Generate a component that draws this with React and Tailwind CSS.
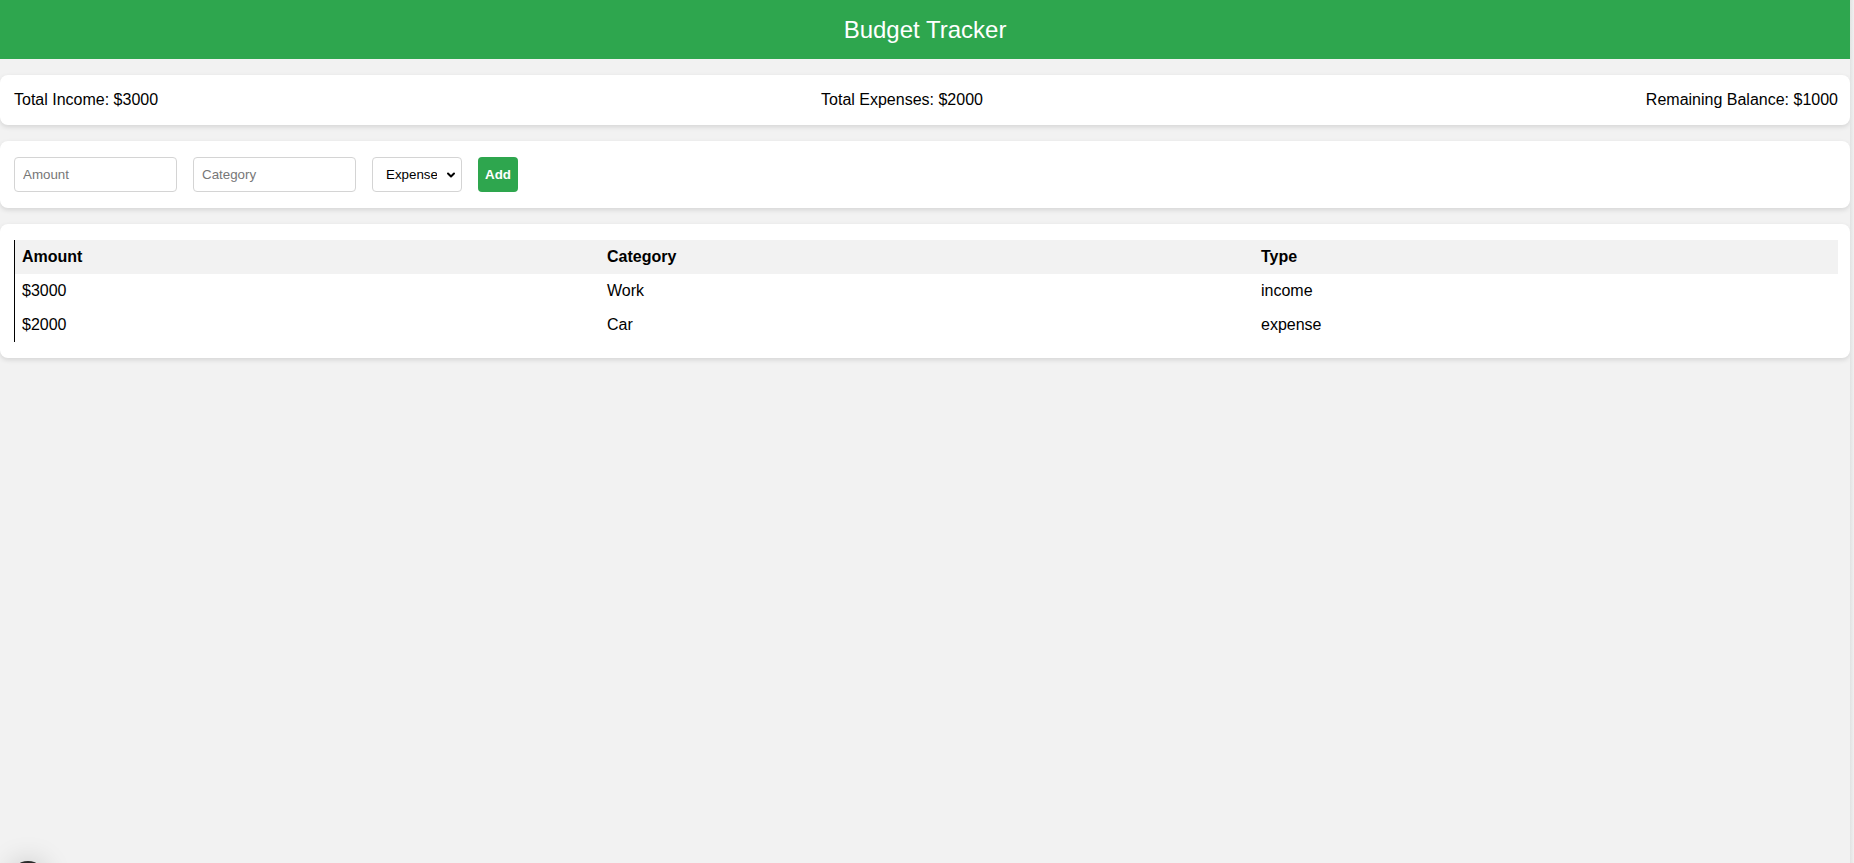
import { ChevronDown } from 'lucide-react'

const transactions = [
  { amount: 3000, category: 'Work', type: 'income' },
  { amount: 2000, category: 'Car', type: 'expense' },
]

const Card = ({ className = '', children }) => (
  <div className={`bg-white rounded-lg shadow-[0_2px_5px_rgba(0,0,0,0.12)] pl-[14px] pr-[12px] ${className}`}>
    {children}
  </div>
)

const Summary = () => {
  const income = transactions.filter(t => t.type === 'income').reduce((s, t) => s + t.amount, 0)
  const expenses = transactions.filter(t => t.type === 'expense').reduce((s, t) => s + t.amount, 0)

  return (
    <Card className="mt-4 py-4 flex items-center justify-between leading-[18px] text-[16px] text-black">
      <span>Total Income: ${income}</span>
      <span>Total Expenses: ${expenses}</span>
      <span>Remaining Balance: ${income - expenses}</span>
    </Card>
  )
}

const EntryForm = () => (
  <Card className="mt-4 py-4 flex items-center gap-4">
    <input
      type="number"
      placeholder="Amount"
      className="w-[163px] h-[35px] px-2 border border-[#d4d4d4] rounded-[4px] text-[13.33px] placeholder:text-[#777] outline-none"
    />
    <input
      type="text"
      placeholder="Category"
      className="w-[163px] h-[35px] px-2 border border-[#d4d4d4] rounded-[4px] text-[13.33px] placeholder:text-[#777] outline-none"
    />
    <div className="relative">
      <select
        defaultValue="expense"
        className="appearance-none w-[90px] h-[35px] pl-[13px] pr-6 border border-[#d4d4d4] rounded-[4px] text-[13.33px] text-black bg-white outline-none"
      >
        <option value="income">Income</option>
        <option value="expense">Expense</option>
      </select>
      <ChevronDown className="absolute right-[5px] top-[12px] w-[12px] h-[12px] text-black pointer-events-none" strokeWidth={4} />
    </div>
    <button className="w-[40px] h-[35px] bg-[#2ea64e] text-white text-[13.33px] font-semibold rounded-[4px]">
      Add
    </button>
  </Card>
)

const TransactionTable = () => (
  <Card className="mt-4 py-4">
    <table className="w-full border-l border-black border-separate border-spacing-0 text-[16px] leading-[18px] text-black">
      <thead>
        <tr className="bg-[#f2f2f2]">
          <th className="w-[586px] text-left font-bold py-2 pl-[7px]">Amount</th>
          <th className="w-[654px] text-left font-bold py-2 pl-[6px]">Category</th>
          <th className="text-left font-bold py-2 pl-[6px]">Type</th>
        </tr>
      </thead>
      <tbody>
        {transactions.map((t, i) => (
          <tr key={i}>
            <td className="py-2 pl-[7px]">${t.amount}</td>
            <td className="py-2 pl-[6px]">{t.category}</td>
            <td className="py-2 pl-[6px]">{t.type}</td>
          </tr>
        ))}
      </tbody>
    </table>
  </Card>
)

export default function App() {
  return (
    <div className="h-screen overflow-hidden bg-[#f2f2f2] flex font-['Liberation_Sans',Arial,sans-serif]">
      <div className="w-[1850px] shrink-0">
        <header className="h-[59px] bg-[#2ea64e] flex items-center justify-center">
          <h1 className="text-white text-[24px] leading-[28px]">Budget Tracker</h1>
        </header>
        <Summary />
        <EntryForm />
        <TransactionTable />
      </div>
      <div className="w-[4px] shrink-0 bg-gradient-to-r from-[#e2e2e2] to-[#f0f0f0]" />
      <div className="fixed left-[10px] bottom-[-34px] w-[36px] h-[36px] rounded-full bg-[#2a2a2a] shadow-[0_0_28px_rgba(0,0,0,0.18)]" />
    </div>
  )
}
